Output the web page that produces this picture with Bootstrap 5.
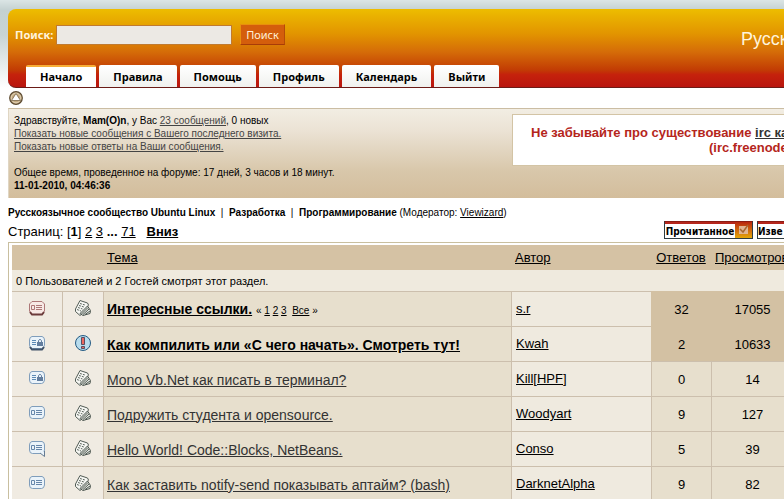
<!DOCTYPE html>
<html lang="ru">
<head>
<meta charset="utf-8">
<meta name="viewport" content="width=device-width, initial-scale=1">
<title>Программирование</title>
<link rel="stylesheet" href="https://cdn.jsdelivr.net/npm/bootstrap@5.3.0/dist/css/bootstrap.min.css">
<style>
body{font:13px/17px "Liberation Sans",Arial,sans-serif;color:#000;background:#fff linear-gradient(#dbe5e5,#c4d1d1 10px,#c8d4d4 35px,#fff 88px) 0 0/100% 88px no-repeat;overflow-x:hidden}
a{color:#000}
.page-wrap{padding:9px 0 0 8px;overflow:hidden}
.masthead{height:79px;border-radius:8px 0 0 8px;border-bottom:1px solid #6b1c17;background:linear-gradient(#edbd00,#e29400 32%,#d56c08 55%,#c23c04 78%,#c5220c 84%,#b9150e)}
.search-row{padding:15px 0 0 7px}
.search-row label{font:bold 11px/20px "Noto Sans",sans-serif;color:#fff4dc;width:41px}
.search-box{width:176px;height:20px;background:#ece9e4;border:1px solid #c07a30;border-radius:0;padding:0 4px}
.search-btn{height:21px;width:45px;margin-left:8px;padding:0;border:1px solid;border-color:#e8900c #b54b08 #a83c08 #e8900c;border-radius:0;background:#d45e0c;color:#fff0d8;font:11px/17px "Noto Sans",sans-serif}
.site-title{font-size:18px;line-height:24px;color:#fff4dc;width:43px;padding-top:18px}
.menu-tabs{padding-left:18px;gap:3px}
.menu-tabs .nav-link{font:bold 11px/19px "Noto Sans",sans-serif;color:#000;height:22px;padding:1px 14px 0;border-radius:2px 2px 0 0;border-top:1px solid #fff;background:linear-gradient(#fff,#f0f1ee)}
.menu-tabs .nav-link.active{background:#fff;border-top:2px solid #f7ae37;padding-top:0}
.fold-row{height:20px;padding-top:3px}
.user-panel{height:90px;padding:5px 0 0 5px;border-top:1px solid #cbbda3;border-left:1px solid #e0d6c3;background:linear-gradient(#f2ede3,#ebe2d4 25%,#d8c7aa 70%,#d3bd9c)}
.user-info{font-size:10px;line-height:13px;width:498px}
.user-info a{color:#444}
.notice{margin-right:-4px;height:52px;background:#fff;border:1px solid #d3c4a5;padding:10px 0 0 18px;font-weight:700;line-height:15px;color:#b5261c}
.notice a{color:#333}
.notice .notice-server{padding-left:178px}
.crumbs{font-size:10px;line-height:14px;padding-top:8px}
.pager{height:22px;padding-top:1px}
.page-links{padding-top:2px}
.mark-btn{height:18px;padding:0;border:1px solid #2e3c42;border-top-color:#8b1d14;border-radius:0;background:#fff;font:bold 10px/15px "DejaVu Sans Condensed",sans-serif;color:#000;box-shadow:inset 0 2px #b5261c}
.mark-label{width:70px;padding-top:2px}
.mark-icon{width:17px;height:16px;background:linear-gradient(#b9260f,#e5a80a)}
.topics-frame{margin-right:-13px;border:1px solid #c9bf9f;padding:2px 3px}
.topics{table-layout:fixed;width:100%;border-collapse:separate;border-spacing:0}
.topics th{height:25px;background:#d5c2a4;font-weight:400;padding:0 4px}
.topics td{height:35px;padding:0 4px;background:#e7dfcd;border-top:1px solid #ccbfad;border-left:1px solid #ccbfad}
.topics td:first-child{border-left:0}
.topics .watchers{height:21px;border-top:0;background:#efeade;font-size:11px;line-height:20px}
.topics td.status{background:#f0ebe2;text-align:center;padding:0}
.topics td.status svg{display:block;margin:-2px auto 0}
.topics td.author{background:#efeadf;padding:0 4px 1px}
.topics td.subject{font-size:14px;padding:2px 3px 0}
.topics .subject a{color:#333}
.topics .pinned .subject a{color:#000}
.topics .pinned .num{background:#d3c1a3;border-color:#d3c1a3}
.mini-pages{font-size:10px}
</style>
</head>
<body>
<svg width="0" height="0" class="position-absolute" aria-hidden="true">
<defs>
<symbol id="bubble" viewBox="0 0 18 18"><path d="M4 2.500H14Q16.500 3 16.500 6V11Q16 14.500 13.500 14.500H4.500Q1.500 14.500 1.500 11V6Q1.500 3 4 2.500Z" fill="#eaf3fa" stroke="#7f9dbb"/></symbol>
<symbol id="bubble-lines" viewBox="0 0 18 18"><path d="M3.500 6.500H6.500V10.500H3.500ZM8 6.500H14M8 8.500H14M8 10.500H14" fill="none" stroke="currentColor"/></symbol>
<symbol id="bubble-lock" viewBox="0 0 18 18"><path d="M4 6.500H8M4 8.500H8M4 10.500H8" stroke="#5d8ab5"/><path d="M9 8H15V12H9Z" fill="#627d9e"/><path d="M10.500 8V6.500Q12 4 13.500 6.500V8" fill="none" stroke="#627d9e"/></symbol>
<symbol id="pages" viewBox="0 0 18 18"><path d="M6 1.500 13.500 4 14.500 6 9 14 6 16.500 1.500 12.500V10Z" fill="#f6f7f3" stroke="#525c56"/><path d="M6 14.500 13.500 7 16.500 11.500 16 14.500 9 16.500Z" fill="#e6e9e2" stroke="#4c5650"/><path d="M6 4.500 11 6M5 6.500 10 8M4 8.500 8.500 10M3 10.500 7 12" fill="none" stroke="#5c665f" stroke-dasharray="2 1"/><path d="M7.500 15 14 8.500M9 15.500 15 10M11 15.500 16 12" fill="none" stroke="#4c5650"/></symbol>
<symbol id="alert" viewBox="0 0 18 18"><circle cx="9" cy="9" r="7.500" fill="#b8dced" stroke="#245b84"/><path d="M7.500 3.500H10.500V10.500H7.500ZM7.500 12.500H10.500V14.500H7.500Z" fill="#ed6860" stroke="#3c3a50" stroke-width=".8"/></symbol>
</defs>
</svg>
<div class="page-wrap">
<header class="masthead d-flex flex-column justify-content-between">
<div class="d-flex justify-content-between align-items-start">
<form class="search-row d-flex align-items-center">
<label for="q">Поиск:</label>
<input id="q" type="text" class="search-box">
<button type="button" class="search-btn">Поиск</button>
</form>
<div class="site-title text-nowrap">Русск</div>
</div>
<nav class="menu-tabs nav">
<a class="nav-link active" href="#">Начало</a><a class="nav-link" href="#">Правила</a><a class="nav-link" href="#">Помощь</a><a class="nav-link" href="#">Профиль</a><a class="nav-link" href="#">Календарь</a><a class="nav-link" href="#">Выйти</a>
</nav>
</header>
<div class="fold-row"><a class="d-inline-block" href="#" aria-label="Свернуть"><svg class="d-block" width="16" height="14" viewBox="0 0 16 14"><circle cx="8" cy="7" r="6.300" fill="#c5ab82" stroke="#5b4a31" stroke-width="1.200"/><circle cx="8" cy="7" r="4.800" fill="none" stroke="#eadfc9" stroke-width=".7"/><path d="M8 2.500 12.500 9.500H3.500Z" fill="#fff" stroke="#6b5738" stroke-width=".7"/></svg></a></div>
<section class="user-panel d-flex align-items-start">
<div class="user-info flex-shrink-0">Здравствуйте, <b>Mam(O)n</b>, у Вас <a href="#">23 сообщений</a>, 0 новых<br><a href="#">Показать новые сообщения с Вашего последнего визита.</a><br><a href="#">Показать новые ответы на Ваши сообщения.</a><br><br>Общее время, проведенное на форуме: 17 дней, 3 часов и 18 минут.<br><b>11-01-2010, 04:46:36</b></div>
<div class="notice flex-grow-1 text-nowrap overflow-hidden"><div>Не забывайте про существование <a href="#">irc ка</a></div><div class="notice-server">(irc.freenode</div></div>
</section>
<div class="crumbs"><b>Русскоязычное сообщество Ubuntu Linux</b> &nbsp;|&nbsp; <b>Разработка</b> &nbsp;|&nbsp; <b>Программирование</b> (Модератор: <a href="#">Viewizard</a>)</div>
<div class="pager d-flex justify-content-between">
<div class="page-links">Страниц: [<b>1</b>] <a href="#">2</a> <a href="#">3</a> <b>...</b> <a href="#">71</a> &nbsp; <a href="#"><b>Вниз</b></a></div>
<div class="d-flex gap-1">
<button type="button" class="mark-btn d-flex"><span class="mark-label">Прочитанное</span><span class="mark-icon"><svg class="d-block" width="17" height="16" viewBox="0 0 17 16"><path d="M4 4H13V12H4Z" fill="#e0b593"/><path d="M5 7 8 10 13 3" fill="none" stroke="#a8672f" stroke-width="1.500"/></svg></span></button>
<button type="button" class="mark-btn border-end-0 overflow-hidden text-nowrap text-start" style="width:27px"><span class="d-block mark-label">Изве</span></button>
</div>
</div>
<div class="topics-frame">
<table class="topics">
<colgroup><col style="width:50px"><col style="width:41px"><col><col style="width:140px"><col style="width:60px"><col style="width:82px"></colgroup>
<thead>
<tr><th></th><th></th><th><a href="#">Тема</a></th><th><a href="#">Автор</a></th><th class="text-center"><a href="#">Ответов</a></th><th><a href="#">Просмотров</a></th></tr>
</thead>
<tbody>
<tr><td class="watchers" colspan="6">0 Пользователей и 2 Гостей смотрят этот раздел.</td></tr>
<tr class="pinned"><td class="status"><svg width="18" height="18"><path d="M4 2.500H14L16.500 5V12L14 15.500H4L1.500 12V5Z" fill="#f7e9e5" stroke="#ad7777"/><path d="M2 13 4 15.500H14L16 13" fill="none" stroke="#6c3b3b" stroke-width="2"/><use href="#bubble-lines" color="#ad7777"/></svg></td><td class="status"><svg width="18" height="18"><use href="#pages"/></svg></td><td class="subject"><b><a href="#">Интересные ссылки.</a></b> <span class="mini-pages">« <a href="#">1</a> <a href="#">2</a> <a href="#">3</a> &nbsp;<a href="#">Все</a> »</span></td><td class="author"><a href="#">s.r</a></td><td class="num text-center">32</td><td class="num text-center">17055</td></tr>
<tr class="pinned"><td class="status"><svg width="18" height="18"><use href="#bubble"/><path d="M2 13 4 15.500H14L16 13" fill="none" stroke="#405269" stroke-width="2"/><use href="#bubble-lock"/></svg></td><td class="status"><svg width="18" height="18"><use href="#alert"/></svg></td><td class="subject"><b><a href="#">Как компилить или «С чего начать». Смотреть тут!</a></b></td><td class="author"><a href="#">Kwah</a></td><td class="num text-center">2</td><td class="num text-center">10633</td></tr>
<tr><td class="status"><svg width="18" height="18"><use href="#bubble"/><use href="#bubble-lock"/></svg></td><td class="status"><svg width="18" height="18"><use href="#pages"/></svg></td><td class="subject"><a href="#">Mono Vb.Net как писать в терминал?</a></td><td class="author"><a href="#">Kill[HPF]</a></td><td class="num text-center">0</td><td class="num text-center">14</td></tr>
<tr><td class="status"><svg width="18" height="18"><use href="#bubble"/><use href="#bubble-lines" color="#6686aa"/></svg></td><td class="status"><svg width="18" height="18"><use href="#pages"/></svg></td><td class="subject"><a href="#">Подружить студента и opensource.</a></td><td class="author"><a href="#">Woodyart</a></td><td class="num text-center">9</td><td class="num text-center">127</td></tr>
<tr><td class="status"><svg width="18" height="18"><use href="#bubble"/><use href="#bubble-lines" color="#6686aa"/><path d="M12 14 16.500 17.500V12" fill="#eaf3fa" stroke="#657b93"/></svg></td><td class="status"><svg width="18" height="18"><use href="#pages"/></svg></td><td class="subject"><a href="#">Hello World! Code::Blocks, NetBeans.</a></td><td class="author"><a href="#">Conso</a></td><td class="num text-center">5</td><td class="num text-center">39</td></tr>
<tr><td class="status"><svg width="18" height="18"><use href="#bubble"/><use href="#bubble-lines" color="#6686aa"/></svg></td><td class="status"><svg width="18" height="18"><use href="#pages"/></svg></td><td class="subject"><a href="#">Как заставить notify-send показывать аптайм? (bash)</a></td><td class="author"><a href="#">DarknetAlpha</a></td><td class="num text-center">9</td><td class="num text-center">82</td></tr>
</tbody>
</table>
</div>
</div>
<script src="https://cdn.jsdelivr.net/npm/bootstrap@5.3.0/dist/js/bootstrap.bundle.min.js"></script>
</body>
</html>
